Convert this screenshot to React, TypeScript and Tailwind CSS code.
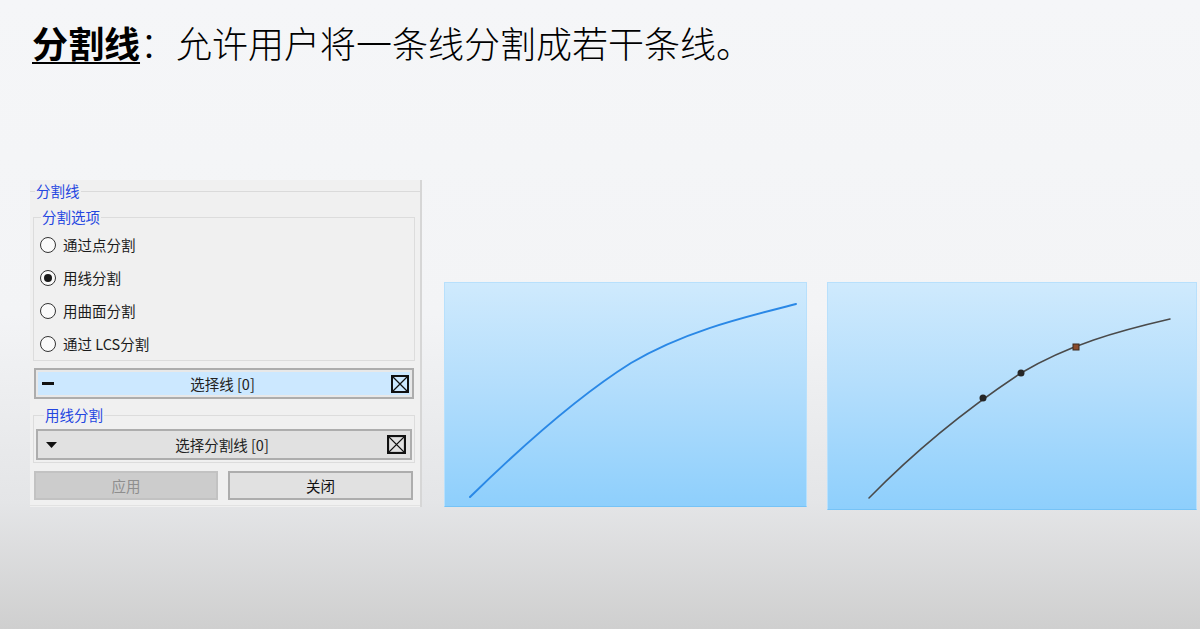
import React from 'react';

const XBox = ({ size = 18 }: { size?: number }) => (
  <svg width={size} height={size} viewBox="0 0 18 18" className="shrink-0">
    <rect x="1" y="1" width="16" height="16" fill="none" stroke="#111" strokeWidth="2" />
    <path d="M2 2 L16 16 M16 2 L2 16" stroke="#111" strokeWidth="1.3" />
  </svg>
);

const Radio = ({ label, checked = false }: { label: string; checked?: boolean }) => (
  <div className="h-[33px] flex items-center gap-[7px] pl-[6px]">
    <span className="w-[16px] h-[16px] rounded-full border border-[#333] bg-[#fafafa] flex items-center justify-center">
      {checked && <span className="w-[8px] h-[8px] rounded-full bg-[#1a1a1a]" />}
    </span>
    <span className="text-[14.5px] leading-[17px] text-[#1a1a1a]">{label}</span>
  </div>
);

const SplitPanel = () => (
  <div className="w-[392px] h-[327px] bg-[#f0f0f0] border-r-2 border-[#d6d6d6] pt-[3px] font-['Noto_Sans_CJK_SC',sans-serif] flex flex-col">
    <fieldset className="border-t border-[#dadada] pr-[5px]">
      <legend className="ml-[5px] px-[1px] text-[14.5px] leading-[16px] text-[#2446e0]">分割线</legend>

      <fieldset className="mt-[10px] ml-[3px] border border-[#dcdcdc] pt-[3px]">
        <legend className="ml-[7px] px-[1px] text-[14.5px] leading-[16px] text-[#2446e0]">分割选项</legend>
        <Radio label="通过点分割" />
        <Radio label="用线分割" checked />
        <Radio label="用曲面分割" />
        <Radio label="通过 LCS分割" />
      </fieldset>

      <div className="mt-[7px] ml-[4px] mr-[1px] h-[31px] border-2 border-[#adadad] bg-[#e8e8e8] p-[2px]">
        <div className="h-full bg-[#cce8ff] flex items-center pl-[4px] pr-[1px]">
          <span className="w-[12px] h-[3px] bg-[#111]" />
          <span className="flex-1 text-center text-[14.5px] leading-[17px] text-[#222]">选择线 [0]</span>
          <XBox />
        </div>
      </div>

      <fieldset className="mt-[8px] ml-[3px] border border-[#dcdcdc] pt-[6px] pb-[2px] px-[2px]">
        <legend className="ml-[8px] px-[1px] text-[14.5px] leading-[16px] text-[#2446e0]">用线分割</legend>
        <div className="h-[31px] border-2 border-[#adadad] bg-[#e1e1e1] flex items-center pl-[8px] pr-[4px]">
          <svg width="11" height="6" viewBox="0 0 11 6" className="shrink-0">
            <path d="M0 0 L11 0 L5.5 6 Z" fill="#111" />
          </svg>
          <span className="flex-1 text-center text-[14.5px] leading-[17px] text-[#222]">选择分割线 [0]</span>
          <XBox size={19} />
        </div>
      </fieldset>

      <div className="mt-[8px] ml-[4px] flex gap-[10px]">
        <button className="w-[184px] h-[29px] border-2 border-[#c2c2c2] bg-[#cccccc] text-[14.5px] text-[#8e8e8e]">应用</button>
        <button className="w-[185px] h-[29px] border-2 border-[#adadad] bg-[#e1e1e1] text-[14.5px] text-[#111]">关闭</button>
      </div>
    </fieldset>
    <div className="mt-auto mb-[1px] h-px bg-[#e2e2e2]" />
  </div>
);

const BlueView = ({ w, h, children }: { w: number; h: number; children: React.ReactNode }) => (
  <div
    className="mt-[102px] border border-[#b8e0fc] border-b-[#76c3f6] bg-[linear-gradient(180deg,#cfeafd_0%,#b4defc_45%,#8ecffc_100%)]"
    style={{ width: w, height: h }}
  >
    {children}
  </div>
);

export default function App() {
  return (
    <div className="w-[1200px] h-[629px] overflow-hidden bg-[linear-gradient(180deg,#f5f6f8_0%,#f3f4f6_50%,#e4e5e7_80%,#cfcfcf_100%)]">
      <div className="h-[180px] pt-[26px] pl-[32px]">
        <h1 className="text-[36px] leading-[40px] font-light text-black font-['Liberation_Serif','Noto_Sans_CJK_SC',serif]">
          <span className="font-semibold underline decoration-2 underline-offset-[4px]">分割线</span>
          <span>：允许用户将一条线分割成若干条线。</span>
        </h1>
      </div>

      <div className="flex items-start pl-[30px]">
        <SplitPanel />

        <div className="ml-[22px]">
          <BlueView w={363} h={225}>
            <svg width="363" height="225" viewBox="0 0 363 225">
              <path
                d="M25 214 C70 170 130 115 186 80 C240 48 300 34 351 21"
                fill="none"
                stroke="#2a88e6"
                strokeWidth="2"
                strokeLinecap="round"
              />
            </svg>
          </BlueView>
        </div>

        <div className="ml-[20px]">
          <BlueView w={370} h={228}>
            <svg width="370" height="228" viewBox="0 0 370 228">
              <path
                d="M41 215 C90 165 140 125 193 90 C240 62 290 48 342 36"
                fill="none"
                stroke="#4a4a4a"
                strokeWidth="1.5"
                strokeLinecap="round"
              />
              <circle cx="155" cy="115" r="3.5" fill="#262626" />
              <circle cx="193" cy="90" r="3.5" fill="#262626" />
              <rect x="245" y="61" width="6" height="6" fill="#8a4b2c" stroke="#3a2a20" strokeWidth="1" />
            </svg>
          </BlueView>
        </div>
      </div>
    </div>
  );
}
